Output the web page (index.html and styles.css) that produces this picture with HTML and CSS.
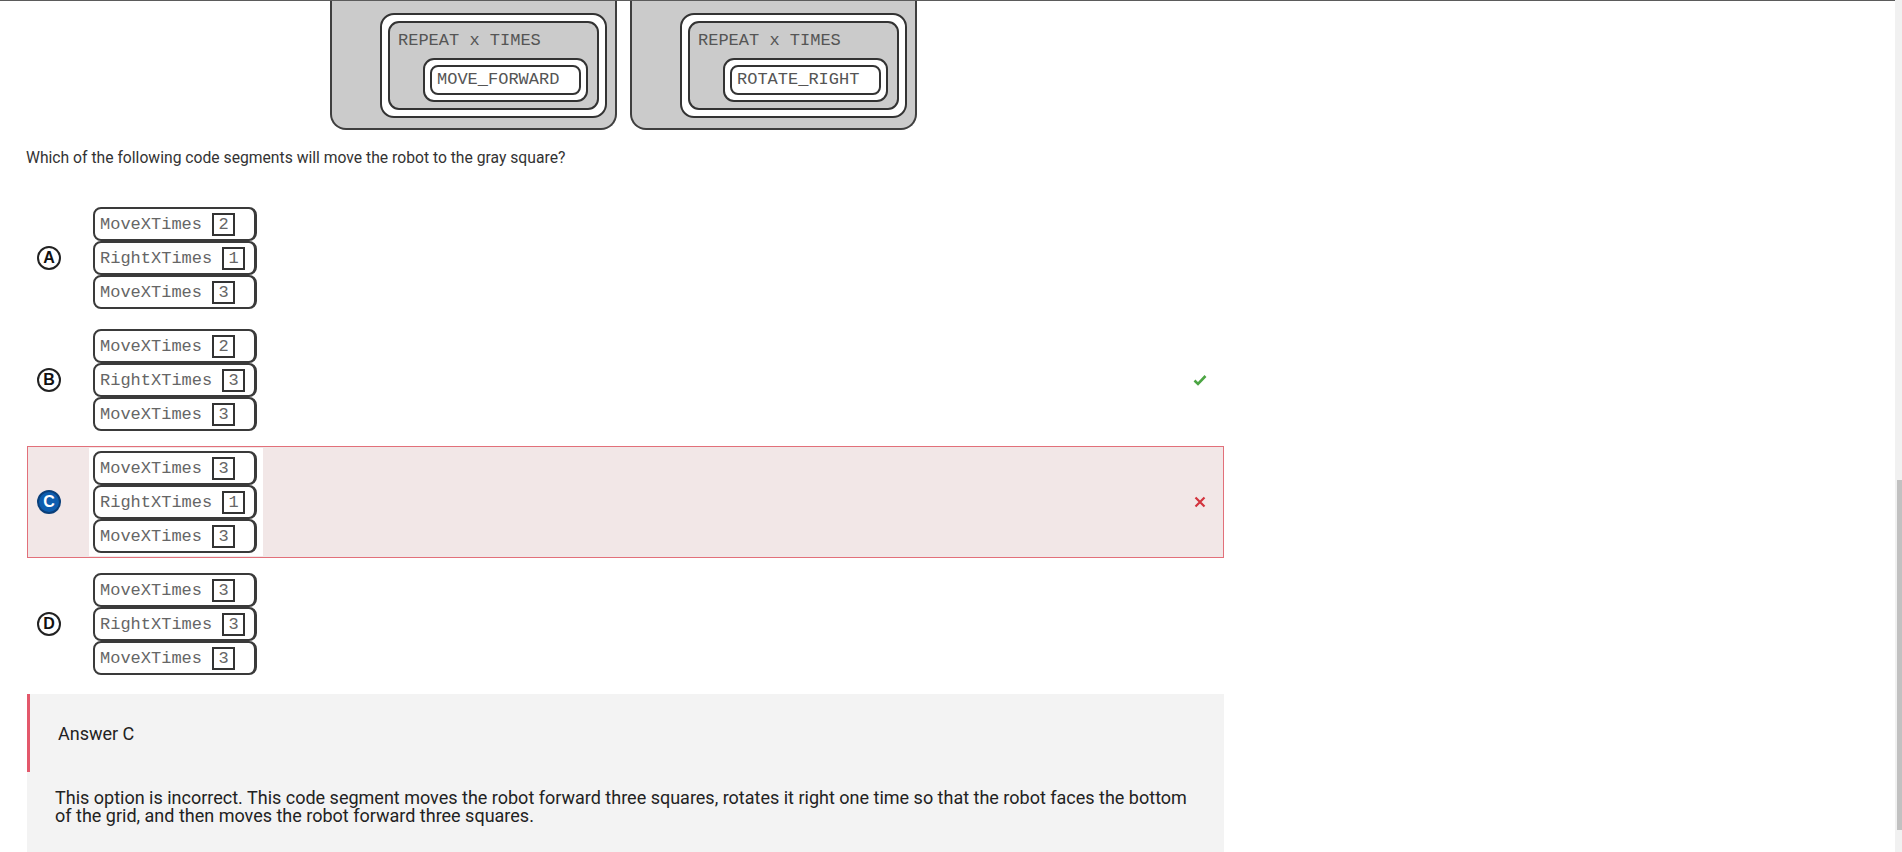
FILE: index.html
```html
<!DOCTYPE html>
<html lang="en">
<head>
    <meta charset="UTF-8">
    <meta name="viewport" content="width=device-width, initial-scale=1.0">
    <title>Robot Code Segments</title>
    <link rel="stylesheet" href="styles.css">
</head>
<body>

    <div class="page">
        <!-- block figures from the question stem -->
        <div class="figures">
            <div class="panel">
                <div class="repeat">
                    <div class="repeat-body">
                        <div class="repeat-label">REPEAT x TIMES</div>
                        <div class="cmd"><div class="cmd-inner">MOVE_FORWARD</div></div>
                    </div>
                </div>
            </div>
            <div class="panel">
                <div class="repeat">
                    <div class="repeat-body">
                        <div class="repeat-label">REPEAT x TIMES</div>
                        <div class="cmd"><div class="cmd-inner">ROTATE_RIGHT</div></div>
                    </div>
                </div>
            </div>
        </div>

        <p class="question">Which of the following code segments will move the robot to the gray square?</p>

        <div class="options">
            <div class="option">
                <span class="letter">A</span>
                <div class="blocks">
                    <div class="row"><span>MoveXTimes</span><span class="num">2</span></div>
                    <div class="row"><span>RightXTimes</span><span class="num">1</span></div>
                    <div class="row"><span>MoveXTimes</span><span class="num">3</span></div>
                </div>
            </div>

            <div class="option">
                <span class="letter">B</span>
                <div class="blocks">
                    <div class="row"><span>MoveXTimes</span><span class="num">2</span></div>
                    <div class="row"><span>RightXTimes</span><span class="num">3</span></div>
                    <div class="row"><span>MoveXTimes</span><span class="num">3</span></div>
                </div>
                <svg class="mark" width="14" height="14" viewBox="0 0 14 14">
                    <polyline points="1.5,7.5 5,11 12.5,3" fill="none" stroke="#4ca543" stroke-width="2.6"/>
                </svg>
            </div>

            <div class="option wrong">
                <span class="letter picked">C</span>
                <div class="blocks">
                    <div class="row"><span>MoveXTimes</span><span class="num">3</span></div>
                    <div class="row"><span>RightXTimes</span><span class="num">1</span></div>
                    <div class="row"><span>MoveXTimes</span><span class="num">3</span></div>
                </div>
                <svg class="mark" width="14" height="14" viewBox="0 0 14 14">
                    <path d="M2.5 2.5 L11.5 11.5 M11.5 2.5 L2.5 11.5" stroke="#d3343e" stroke-width="2.2"/>
                </svg>
            </div>

            <div class="option">
                <span class="letter">D</span>
                <div class="blocks">
                    <div class="row"><span>MoveXTimes</span><span class="num">3</span></div>
                    <div class="row"><span>RightXTimes</span><span class="num">3</span></div>
                    <div class="row"><span>MoveXTimes</span><span class="num">3</span></div>
                </div>
            </div>
        </div>

        <div class="answer">
            <div class="answer-head">Answer C</div>
            <div class="answer-body">This option is incorrect. This code segment moves the robot forward three squares, rotates it right one time so that the robot faces the bottom of the grid, and then moves the robot forward three squares.</div>
        </div>
    </div>

    <div class="scrollbar"><div class="thumb"></div></div>

</body>
</html>
```

FILE: styles.css
```css
html, body {
    overflow: hidden;
}
body {
    margin: 0;
    font-family: Roboto, "Liberation Sans", Arial, sans-serif;
    color: #333;
    background: #fff;
}
.page {
    margin-right: 7px;
    border-top: 1px solid #5b5b5b;
}

/* stem figures */
.figures {
    display: flex;
    gap: 13px;
    padding-left: 330px;
}
.panel {
    width: 287px;
    height: 129px;
    box-sizing: border-box;
    background: #cbcbcb;
    border: 2px solid #3f3f3f;
    border-top: none;
    border-radius: 0 0 16px 16px;
    padding: 12px 8px 0 48px;
}
.repeat {
    background: #fff;
    border: 2px solid #333;
    border-radius: 14px;
    padding: 6px;
}
.repeat-body {
    background: #cbcbcb;
    border: 2px solid #333;
    border-radius: 11px;
    padding: 8px 8px 6px;
}
.repeat-label, .cmd-inner, .row {
    font-family: "Liberation Mono", "Courier New", monospace;
    font-size: 17px;
    color: #555;
}
.repeat-label {
    line-height: 20px;
}
.cmd {
    margin: 7px 0 0 25px;
    width: 165px;
    box-sizing: border-box;
    background: #fff;
    border: 2px solid #333;
    border-radius: 11px;
    padding: 5px;
}
.cmd-inner {
    height: 30px;
    box-sizing: border-box;
    border: 2px solid #333;
    border-radius: 8px;
    padding-left: 5px;
    line-height: 26px;
}

.question {
    margin: 17px 0 33px 26px;
    font-size: 15.7px;
    line-height: 22px;
}

/* answer choices */
.options {
    margin-left: 27px;
    width: 1197px;
}
.option {
    display: flex;
    align-items: center;
    height: 112px;
    box-sizing: border-box;
    border: 1px solid transparent;
    padding: 0 16px 0 9px;
    margin-bottom: 10px;
}
.option.wrong {
    background: #f2e7e7;
    border-color: #e2707a;
}
.letter {
    width: 24px;
    height: 24px;
    box-sizing: border-box;
    border: 2px solid #222;
    border-radius: 50%;
    background: #fff;
    color: #111;
    font-family: "Liberation Sans", Arial, sans-serif;
    font-weight: bold;
    font-size: 16px;
    line-height: 20px;
    text-align: center;
}
.letter.picked {
    background: #0d5daf;
    border-color: #0a3f7a;
    color: #fff;
}
.blocks {
    margin-left: 28px;
    background: #fff;
    padding: 3px 6px 3px 4px;
}
.row {
    display: flex;
    align-items: center;
    gap: 10px;
    width: 164px;
    height: 34px;
    box-sizing: border-box;
    border: 2px solid #3a3a3a;
    border-right-width: 3px;
    border-radius: 8px;
    padding-left: 5px;
    color: #666;
}
.num {
    width: 23px;
    height: 23px;
    box-sizing: border-box;
    border: 2px solid #333;
    text-align: center;
    line-height: 19px;
}
.mark {
    margin-left: auto;
}

/* explanation */
.answer {
    margin: 14px 0 0 27px;
    width: 1197px;
    background: #f3f3f3;
    padding-bottom: 40px;
}
.answer-head {
    height: 78px;
    display: flex;
    align-items: center;
    border-left: 3px solid #e3586b;
    padding-left: 28px;
    font-size: 18px;
    color: #222;
}
.answer-body {
    padding: 17px 30px 0 28px;
    font-size: 18px;
    line-height: 18px;
    color: #222;
}

.scrollbar {
    position: fixed;
    top: 0;
    right: 0;
    width: 7px;
    height: 100%;
    background: #f1f1f1;
}
.thumb {
    margin: 480px 0 0 2px;
    height: 350px;
    background: #c1c1c1;
}
```
